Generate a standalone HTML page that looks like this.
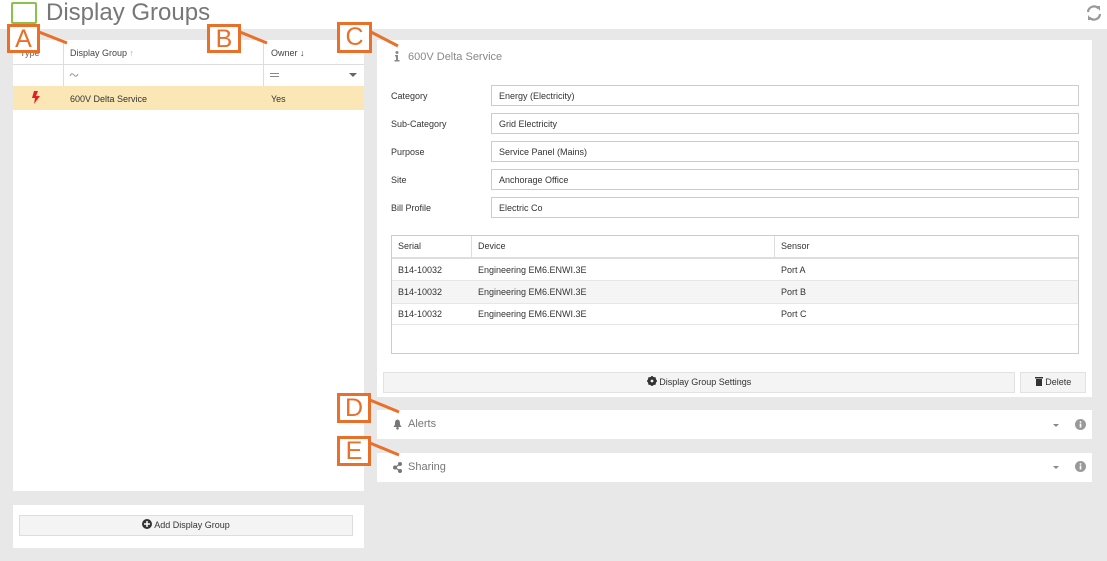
<!DOCTYPE html><html><head><style>
body{margin:0;width:1107px;height:561px;position:relative;background:#e8e8e8;font-family:"Liberation Sans",sans-serif;font-size:9px;color:#333;overflow:hidden}
.a{position:absolute}
.w{background:#fff}
.lbl{position:absolute;border:3px solid #e8702a;background:#fff;color:#e8702a;font-size:25px;line-height:24px;text-align:center;box-sizing:border-box}
.inp{position:absolute;left:491px;width:588px;height:21px;border:1px solid #ccc;box-sizing:border-box;padding:5px 7px;font-size:9px}
.fl{position:absolute;left:391px;font-size:9px}
</style></head><body>
<div class="a w" style="left:0;top:0;width:1107px;height:29px"></div>
<div class="a" style="left:11px;top:2px;width:22px;height:18px;border:2px solid #8bc34a;border-radius:2px"></div>
<div class="a" style="left:46px;top:-1px;font-size:24px;color:#777">Display Groups</div>
<svg class="a" style="left:1086px;top:4px" width="16" height="18" viewBox="0 0 16 18"><g fill="none" stroke="#999" stroke-width="2.2"><path d="M2 8a6 6 0 0 1 10.5-3.5"/><path d="M14 10a6 6 0 0 1-10.5 3.5"/></g><path d="M10 2l4 0 0 5z" fill="#999"/><path d="M6 16l-4 0 0-5z" fill="#999"/></svg>

<div class="a w" style="left:13px;top:40px;width:351px;height:451px"></div>
<div class="a" style="left:13px;top:40px;width:351px;height:24px;border-bottom:1px solid #ddd"></div>
<div class="a" style="left:63px;top:40px;width:1px;height:46px;background:#ddd"></div>
<div class="a" style="left:263px;top:40px;width:1px;height:46px;background:#ddd"></div>
<div class="a" style="left:20px;top:48px;color:#666">Type</div>
<div class="a" style="left:70px;top:48px;color:#444">Display Group <span style="color:#aaa">&#x2191;</span></div>
<div class="a" style="left:271px;top:48px;color:#444">Owner &#x2193;</div>
<svg class="a" style="left:69px;top:72px" width="10" height="6"><path d="M1 4Q3 0 5 3T9 2" fill="none" stroke="#999" stroke-width="1"/></svg>
<div class="a" style="left:270px;top:73px;width:9px;height:1px;background:#888"></div>
<div class="a" style="left:270px;top:76px;width:9px;height:1px;background:#888"></div>
<div class="a" style="left:349px;top:73px;width:0;height:0;border:4px solid transparent;border-top:4px solid #666"></div>
<div class="a" style="left:13px;top:86px;width:351px;height:24px;background:#fbe7b5"></div>
<svg class="a" style="left:32px;top:91px" width="9" height="13" viewBox="0 0 9 13"><path d="M2 0h4L4 5h4L2 13l1-6H0z" fill="#e52020"/></svg>
<div class="a" style="left:70px;top:94px">600V Delta Service</div>
<div class="a" style="left:271px;top:94px">Yes</div>

<div class="a w" style="left:13px;top:505px;width:351px;height:43px"></div>
<div class="a" style="left:19px;top:515px;width:334px;height:21px;background:#f4f4f4;border:1px solid #ddd;box-sizing:border-box;text-align:center;line-height:19px"><svg width="10" height="10" style="vertical-align:-1px"><circle cx="5" cy="5" r="5" fill="#333"/><path d="M5 2v6M2 5h6" stroke="#fff" stroke-width="1.5"/></svg> Add Display Group</div>

<div class="a w" style="left:377px;top:40px;width:715px;height:357px"></div>
<svg class="a" style="left:394px;top:51px" width="6" height="11"><circle cx="3" cy="1.5" r="1.5" fill="#888"/><path d="M1 4h3v5h1.5v1.5h-5V9H2V5.5H1z" fill="#888"/></svg>
<div class="a" style="left:408px;top:51px;color:#888;font-size:11px">600V Delta Service</div>
<div class="fl" style="top:91px">Category</div><div class="inp" style="top:85px">Energy (Electricity)</div>
<div class="fl" style="top:119px">Sub-Category</div><div class="inp" style="top:113px">Grid Electricity</div>
<div class="fl" style="top:147px">Purpose</div><div class="inp" style="top:141px">Service Panel (Mains)</div>
<div class="fl" style="top:175px">Site</div><div class="inp" style="top:169px">Anchorage Office</div>
<div class="fl" style="top:203px">Bill Profile</div><div class="inp" style="top:197px">Electric Co</div>
<div class="a" style="left:391px;top:235px;width:688px;height:119px;border:1px solid #ccc;box-sizing:border-box"></div>
<div class="a" style="left:392px;top:236px;width:686px;height:21px;border-bottom:2px solid #ddd"></div>
<div class="a" style="left:471px;top:236px;width:1px;height:22px;background:#ddd"></div>
<div class="a" style="left:774px;top:236px;width:1px;height:22px;background:#ddd"></div>
<div class="a" style="left:398px;top:241px">Serial</div><div class="a" style="left:478px;top:241px">Device</div><div class="a" style="left:781px;top:241px">Sensor</div>
<div class="a" style="left:392px;top:280px;width:686px;height:22px;background:#f5f5f5;border-top:1px solid #e6e6e6;border-bottom:1px solid #e6e6e6"></div>
<div class="a" style="left:392px;top:324px;width:686px;height:1px;background:#e6e6e6"></div>
<div class="a" style="left:398px;top:265px">B14-10032</div><div class="a" style="left:478px;top:265px">Engineering EM6.ENWI.3E</div><div class="a" style="left:781px;top:265px">Port A</div>
<div class="a" style="left:398px;top:287px">B14-10032</div><div class="a" style="left:478px;top:287px">Engineering EM6.ENWI.3E</div><div class="a" style="left:781px;top:287px">Port B</div>
<div class="a" style="left:398px;top:309px">B14-10032</div><div class="a" style="left:478px;top:309px">Engineering EM6.ENWI.3E</div><div class="a" style="left:781px;top:309px">Port C</div>
<div class="a" style="left:383px;top:372px;width:632px;height:21px;background:#f4f4f4;border:1px solid #e2e2e2;box-sizing:border-box;text-align:center;line-height:19px"><svg width="10" height="10" style="vertical-align:-1px" viewBox="0 0 10 10"><circle cx="5" cy="5" r="3.3" fill="none" stroke="#333" stroke-width="2.2"/><path d="M5 0v10M0 5h10M1.5 1.5l7 7M8.5 1.5l-7 7" stroke="#333" stroke-width="1.6"/><circle cx="5" cy="5" r="1.4" fill="#f4f4f4"/></svg> Display Group Settings</div>
<div class="a" style="left:1020px;top:372px;width:66px;height:21px;background:#f4f4f4;border:1px solid #e2e2e2;box-sizing:border-box;text-align:center;line-height:19px"><svg width="8" height="10" style="vertical-align:-1px"><rect x="0" y="1" width="8" height="1.5" fill="#333"/><rect x="1" y="3" width="6" height="7" fill="#333"/></svg> Delete</div>

<div class="a w" style="left:377px;top:410px;width:715px;height:29px"></div>
<svg class="a" style="left:393px;top:419px" width="9" height="11"><path d="M4.5 0.5C2 1 2 3 2 5.5L0.5 8h8L7 5.5C7 3 7 1 4.5 0.5z" fill="#777"/><circle cx="4.5" cy="9.3" r="1.3" fill="#777"/></svg>
<div class="a" style="left:408px;top:418px;color:#777;font-size:11px">Alerts</div>
<div class="a" style="left:1053px;top:424px;border:3px solid transparent;border-top:3px solid #888"></div>
<svg class="a" style="left:1075px;top:419px" width="11" height="11"><circle cx="5.5" cy="5.5" r="5.5" fill="#999"/><rect x="4.7" y="4.5" width="1.6" height="4" fill="#fff"/><circle cx="5.5" cy="3" r="0.9" fill="#fff"/></svg>
<div class="a w" style="left:377px;top:453px;width:715px;height:29px"></div>
<svg class="a" style="left:393px;top:462px" width="9" height="11"><path d="M7 2L2 5.5 7 9" fill="none" stroke="#777" stroke-width="1.2"/><circle cx="7" cy="2" r="2" fill="#777"/><circle cx="2" cy="5.5" r="2" fill="#777"/><circle cx="7" cy="9" r="2" fill="#777"/></svg>
<div class="a" style="left:408px;top:461px;color:#777;font-size:11px">Sharing</div>
<div class="a" style="left:1053px;top:466px;border:3px solid transparent;border-top:3px solid #888"></div>
<svg class="a" style="left:1075px;top:461px" width="11" height="11"><circle cx="5.5" cy="5.5" r="5.5" fill="#999"/><rect x="4.7" y="4.5" width="1.6" height="4" fill="#fff"/><circle cx="5.5" cy="3" r="0.9" fill="#fff"/></svg>

<svg class="a" style="left:0;top:0" width="1107" height="561"><g stroke="#e8702a" stroke-width="3">
<line x1="39" y1="32" x2="67" y2="43"/><line x1="240" y1="32" x2="267" y2="43"/><line x1="371" y1="32" x2="398" y2="46"/>
<line x1="370" y1="400" x2="399" y2="412"/><line x1="370" y1="443" x2="399" y2="455"/></g></svg>
<div class="lbl" style="left:7px;top:24px;width:33px;height:29px">A</div>
<div class="lbl" style="left:207px;top:24px;width:34px;height:29px">B</div>
<div class="lbl" style="left:337px;top:22px;width:35px;height:31px">C</div>
<div class="lbl" style="left:337px;top:393px;width:34px;height:30px">D</div>
<div class="lbl" style="left:337px;top:436px;width:34px;height:30px">E</div>
</body></html>
